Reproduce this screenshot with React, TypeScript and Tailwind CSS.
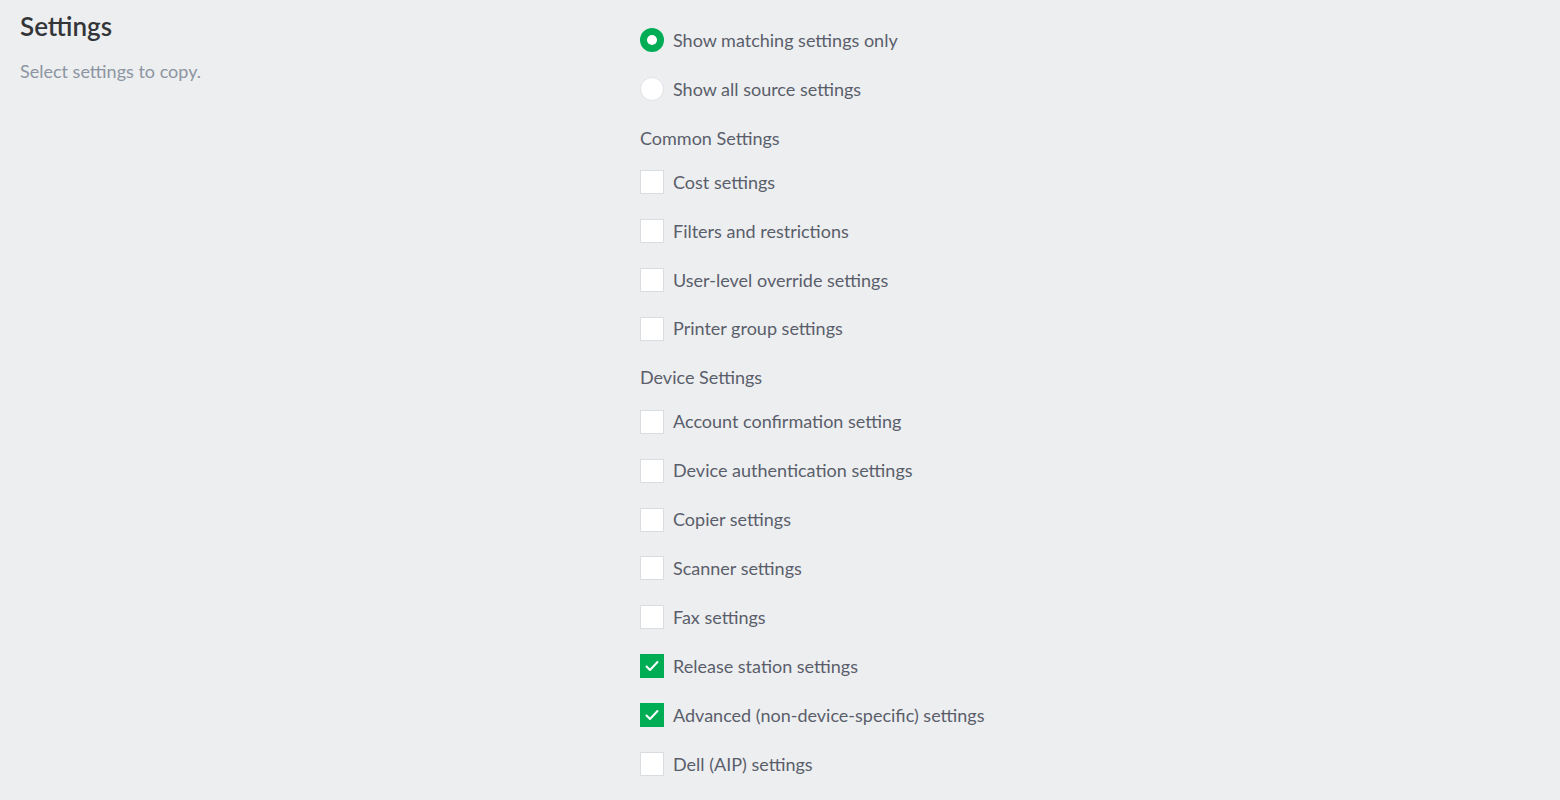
import React from 'react';

const font = { fontFamily: 'Lato, "Noto Sans", sans-serif' };

const Check = ({ on }: { on?: boolean }) =>
    on ? (
        <span className="flex h-6 w-6 shrink-0 items-center justify-center bg-[#00ad55]">
            <svg width="16" height="16" viewBox="0 0 16 16" fill="none">
                <path d="M2.5 8.5 L6 12 L13.5 4" stroke="white" strokeWidth="2" strokeLinecap="round" strokeLinejoin="round" />
            </svg>
        </span>
    ) : (
        <span className="h-6 w-6 shrink-0 border border-[#d9dce1] bg-white"></span>
    );

const Radio = ({ on }: { on?: boolean }) =>
    on ? (
        <span className="flex h-6 w-6 shrink-0 items-center justify-center rounded-full bg-[#00ad55]">
            <span className="h-2.5 w-2.5 rounded-full bg-white"></span>
        </span>
    ) : (
        <span className="h-6 w-6 shrink-0 rounded-full border border-[#dfe1e5] bg-white"></span>
    );

const Row = ({ children, label }: { children: React.ReactNode; label: string }) => (
    <label className="flex h-[48.9px] items-center gap-[9px] text-[18px] text-[#5a5e6b]">
        {children}
        <span>{label}</span>
    </label>
);

const Header = ({ label }: { label: string }) => (
    <div className="h-[44px] pt-3 text-[18px] leading-6 text-[#5a5e6b]">{label}</div>
);

const common = ['Cost settings', 'Filters and restrictions', 'User-level override settings', 'Printer group settings'];

const device: [string, boolean][] = [
    ['Account confirmation setting', false],
    ['Device authentication settings', false],
    ['Copier settings', false],
    ['Scanner settings', false],
    ['Fax settings', false],
    ['Release station settings', true],
    ['Advanced (non-device-specific) settings', true],
    ['Dell (AIP) settings', false],
];

export default function App() {
    return (
        <div className="flex min-h-screen bg-[#edeef0]" style={font}>
            <div className="w-[640px] shrink-0 pl-5 pt-[10px]">
                <h1 className="text-[26px] font-semibold leading-8 text-[#333539]">Settings</h1>
                <p className="mt-[17px] text-[18px] leading-6 text-[#8c95a1]">Select settings to copy.</p>
            </div>
            <div className="flex flex-col pt-4">
                <Row label="Show matching settings only"><Radio on /></Row>
                <Row label="Show all source settings"><Radio /></Row>
                <Header label="Common Settings" />
                {common.map((c) => (
                    <Row key={c} label={c}><Check /></Row>
                ))}
                <Header label="Device Settings" />
                {device.map(([d, on]) => (
                    <Row key={d} label={d}><Check on={on} /></Row>
                ))}
            </div>
        </div>
    );
}
